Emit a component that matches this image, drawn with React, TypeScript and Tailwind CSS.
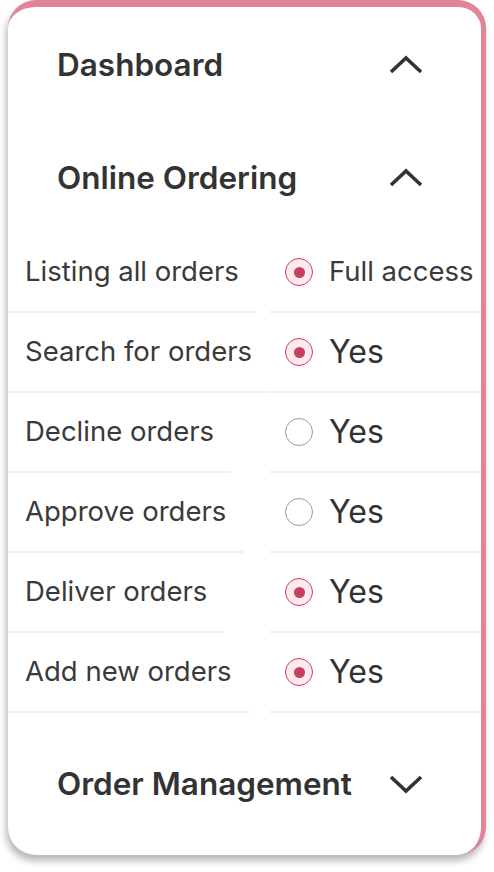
import React from 'react';

type Row = { label: string; value: string; on: boolean };

const rows: Row[] = [
  { label: 'Listing all orders', value: 'Full access', on: true },
  { label: 'Search for orders', value: 'Yes', on: true },
  { label: 'Decline orders', value: 'Yes', on: false },
  { label: 'Approve orders', value: 'Yes', on: false },
  { label: 'Deliver orders', value: 'Yes', on: true },
  { label: 'Add new orders', value: 'Yes', on: true },
];

const Chevron = ({ up }: { up: boolean }) => (
  <svg width="34" height="20" viewBox="0 0 34 20" fill="none">
    <polyline
      points={up ? '2,17 17,3 32,17' : '2,3 17,17 32,3'}
      stroke="#333333"
      strokeWidth="3.6"
      strokeLinecap="butt"
      strokeLinejoin="miter"
    />
  </svg>
);

const Radio = ({ on }: { on: boolean }) =>
  on ? (
    <span className="w-[28px] h-[28px] rounded-full border-[1.5px] border-[#c4425d] bg-[#fdeaee] flex items-center justify-center shrink-0">
      <span className="w-[11px] h-[11px] rounded-full bg-[#c4425d]"></span>
    </span>
  ) : (
    <span className="w-[28px] h-[28px] rounded-full border-[1.5px] border-[#9b9b9b] bg-white shrink-0"></span>
  );

const Header = ({ title, up, h }: { title: string; up: boolean; h: string }) => (
  <div className={`flex items-center justify-between pl-[49px] pr-[58px] ${h}`}>
    <span className="text-[31.5px] font-semibold text-[#333333]">{title}</span>
    <Chevron up={up} />
  </div>
);

const App: React.FC = () => {
  return (
    <div className="w-[494px] h-[872px] bg-white font-['Inter',sans-serif] overflow-hidden">
      <div className="ml-2 w-[478px] h-[855px] bg-white rounded-[28px] border-t-[7px] border-r-[5px] border-[#e08497] shadow-[-2px_6px_7px_rgba(0,0,0,0.28)] flex flex-col">
        <Header title="Dashboard" up={true} h="h-[116px]" />
        <Header title="Online Ordering" up={true} h="h-[110px]" />

        {/* Permission rows */}
        <div className="flex flex-col">
          {rows.map((r) => (
            <div key={r.label} className="flex h-[80px]">
              <div className="w-[262px] flex items-stretch">
                <div className="flex items-center px-[17px] border-b-2 border-[#eceef2] text-[27.5px] text-[#3a3a3a] whitespace-nowrap">
                  {r.label}
                </div>
              </div>
              <div className="flex-1 flex items-center gap-[16px] pl-[15px] border-b-2 border-[#eceef2]">
                <Radio on={r.on} />
                <span
                  className={
                    r.value === 'Yes'
                      ? 'text-[32px] text-[#333333] whitespace-nowrap'
                      : 'text-[27.5px] text-[#3a3a3a] whitespace-nowrap'
                  }
                >
                  {r.value}
                </span>
              </div>
            </div>
          ))}
        </div>

        <Header title="Order Management" up={false} h="h-[142px]" />
      </div>
    </div>
  );
};

export default App;
